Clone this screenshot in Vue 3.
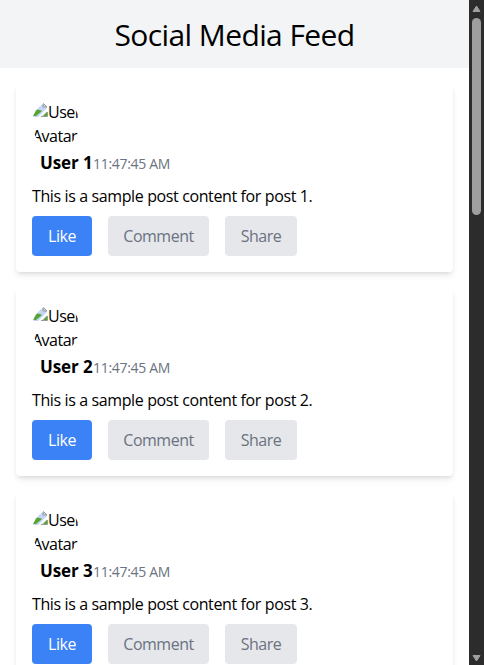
<template>
    <div class="window">
        <div class="page">
            <header class="header">
                <h1>Social Media Feed</h1>
            </header>
            <main class="feed">
                <article v-for="post in posts" :key="post.id" class="post">
                    <div class="avatar">
                        <div class="alt">
                            <svg class="broken" width="16" height="16" viewBox="0 0 16 16">
                                <path d="M1 1h10l4 4v10H1z" fill="#c4d5f5" />
                                <path d="M0 14V11l5-3.5 3 .5 2 1-6 5z" fill="#55a532" />
                                <path d="M6 15 16 5v3L9 15z" fill="#fff" />
                                <path d="M1 14V1h10l4 4M11 1v4h4" fill="none" stroke="#999" />
                                <path d="M11 14l4-4v4z" fill="#55a532" />
                                <path d="M9 14.5h6.5V10" fill="none" stroke="#999" />
                            </svg>
                            <span>User</span>
                        </div>
                        <div class="alt">Avatar</div>
                    </div>
                    <div class="meta">
                        <h3>{{ post.user }}</h3>
                        <span class="time">{{ post.time }}</span>
                    </div>
                    <p class="content">{{ post.content }}</p>
                    <div class="actions">
                        <button class="btn like">Like</button>
                        <button class="btn comment">Comment</button>
                        <button class="btn share">Share</button>
                    </div>
                </article>
            </main>
        </div>
        <div class="scrollbar">
            <svg class="arrow" width="9" height="8" viewBox="0 0 9 8">
                <path d="M4.5 1 8 6.5H1z" fill="#9f9f9f" stroke="#9f9f9f" stroke-linejoin="round" />
            </svg>
            <div class="thumb"></div>
            <svg class="arrow down" width="9" height="8" viewBox="0 0 9 8">
                <path d="M1 1.5h7L4.5 7z" fill="#9f9f9f" stroke="#9f9f9f" stroke-linejoin="round" />
            </svg>
        </div>
    </div>
</template>

<script setup>
const posts = [1, 2, 3].map((id) => ({
    id,
    user: `User ${id}`,
    time: '11:47:45 AM',
    content: `This is a sample post content for post ${id}.`,
}));
</script>

<style>
body {
    margin: 0;
    overflow: hidden;
}
</style>

<style scoped>
.window {
    display: flex;
    height: 665px;
    overflow: hidden;
    background: #fff;
    color: #000;
    font-family: "Segoe UI", "Open Sans", "Noto Sans", sans-serif;
    font-size: 16px;
    line-height: 24px;
}

h1,
h3,
p {
    margin: 0;
}

.page {
    flex: 1;
    min-width: 0;
}

.header {
    padding: 17px 16px 15px;
    background: #f3f4f6;
    text-align: center;
}

.header h1 {
    font-size: 30px;
    font-weight: 400;
    line-height: 36px;
    letter-spacing: -0.6px;
}

.feed {
    padding: 16px;
}

.post {
    height: 156px;
    padding: 16px;
    margin-bottom: 16px;
    border-radius: 4px;
    background: #fff;
    box-shadow: 0 4px 6px -1px rgba(0, 0, 0, 0.1), 0 2px 4px -2px rgba(0, 0, 0, 0.1);
}

.avatar {
    width: 48px;
    height: 48px;
    border-radius: 50%;
    overflow: hidden;
}

.alt {
    display: flex;
    align-items: flex-start;
    height: 24px;
    letter-spacing: -0.5px;
    white-space: nowrap;
}

.broken {
    flex: none;
    margin-top: 2px;
}

.meta {
    display: flex;
    height: 27px;
    padding-top: 1px;
    margin-bottom: 8px;
}

.meta h3 {
    width: 53px;
    margin-left: 8px;
    font-size: 17px;
    font-weight: 700;
    line-height: 28px;
    letter-spacing: -0.1px;
    white-space: nowrap;
}

.time {
    padding-top: 5px;
    color: #6b7280;
    font-size: 14px;
    line-height: 20px;
    letter-spacing: -0.3px;
}

.content {
    margin-bottom: 8px;
    letter-spacing: -0.38px;
    white-space: nowrap;
}

.actions {
    display: flex;
    gap: 16px;
}

.btn {
    height: 40px;
    padding: 0;
    border: 0;
    border-radius: 4px;
    background: #e5e7eb;
    color: #6b7280;
    font: inherit;
    letter-spacing: -0.5px;
}

.like {
    width: 60px;
    background: #3b82f6;
    color: #fff;
}

.comment {
    width: 101px;
}

.share {
    width: 72px;
}

.scrollbar {
    display: flex;
    flex-direction: column;
    align-items: center;
    box-sizing: border-box;
    width: 15px;
    padding: 5px 0 3px;
    background: #2c2c2c;
}

.arrow {
    display: block;
}

.thumb {
    width: 9px;
    height: 197px;
    margin-top: 5px;
    border-radius: 5px;
    background: #9f9f9f;
}

.down {
    margin-top: auto;
}
</style>
